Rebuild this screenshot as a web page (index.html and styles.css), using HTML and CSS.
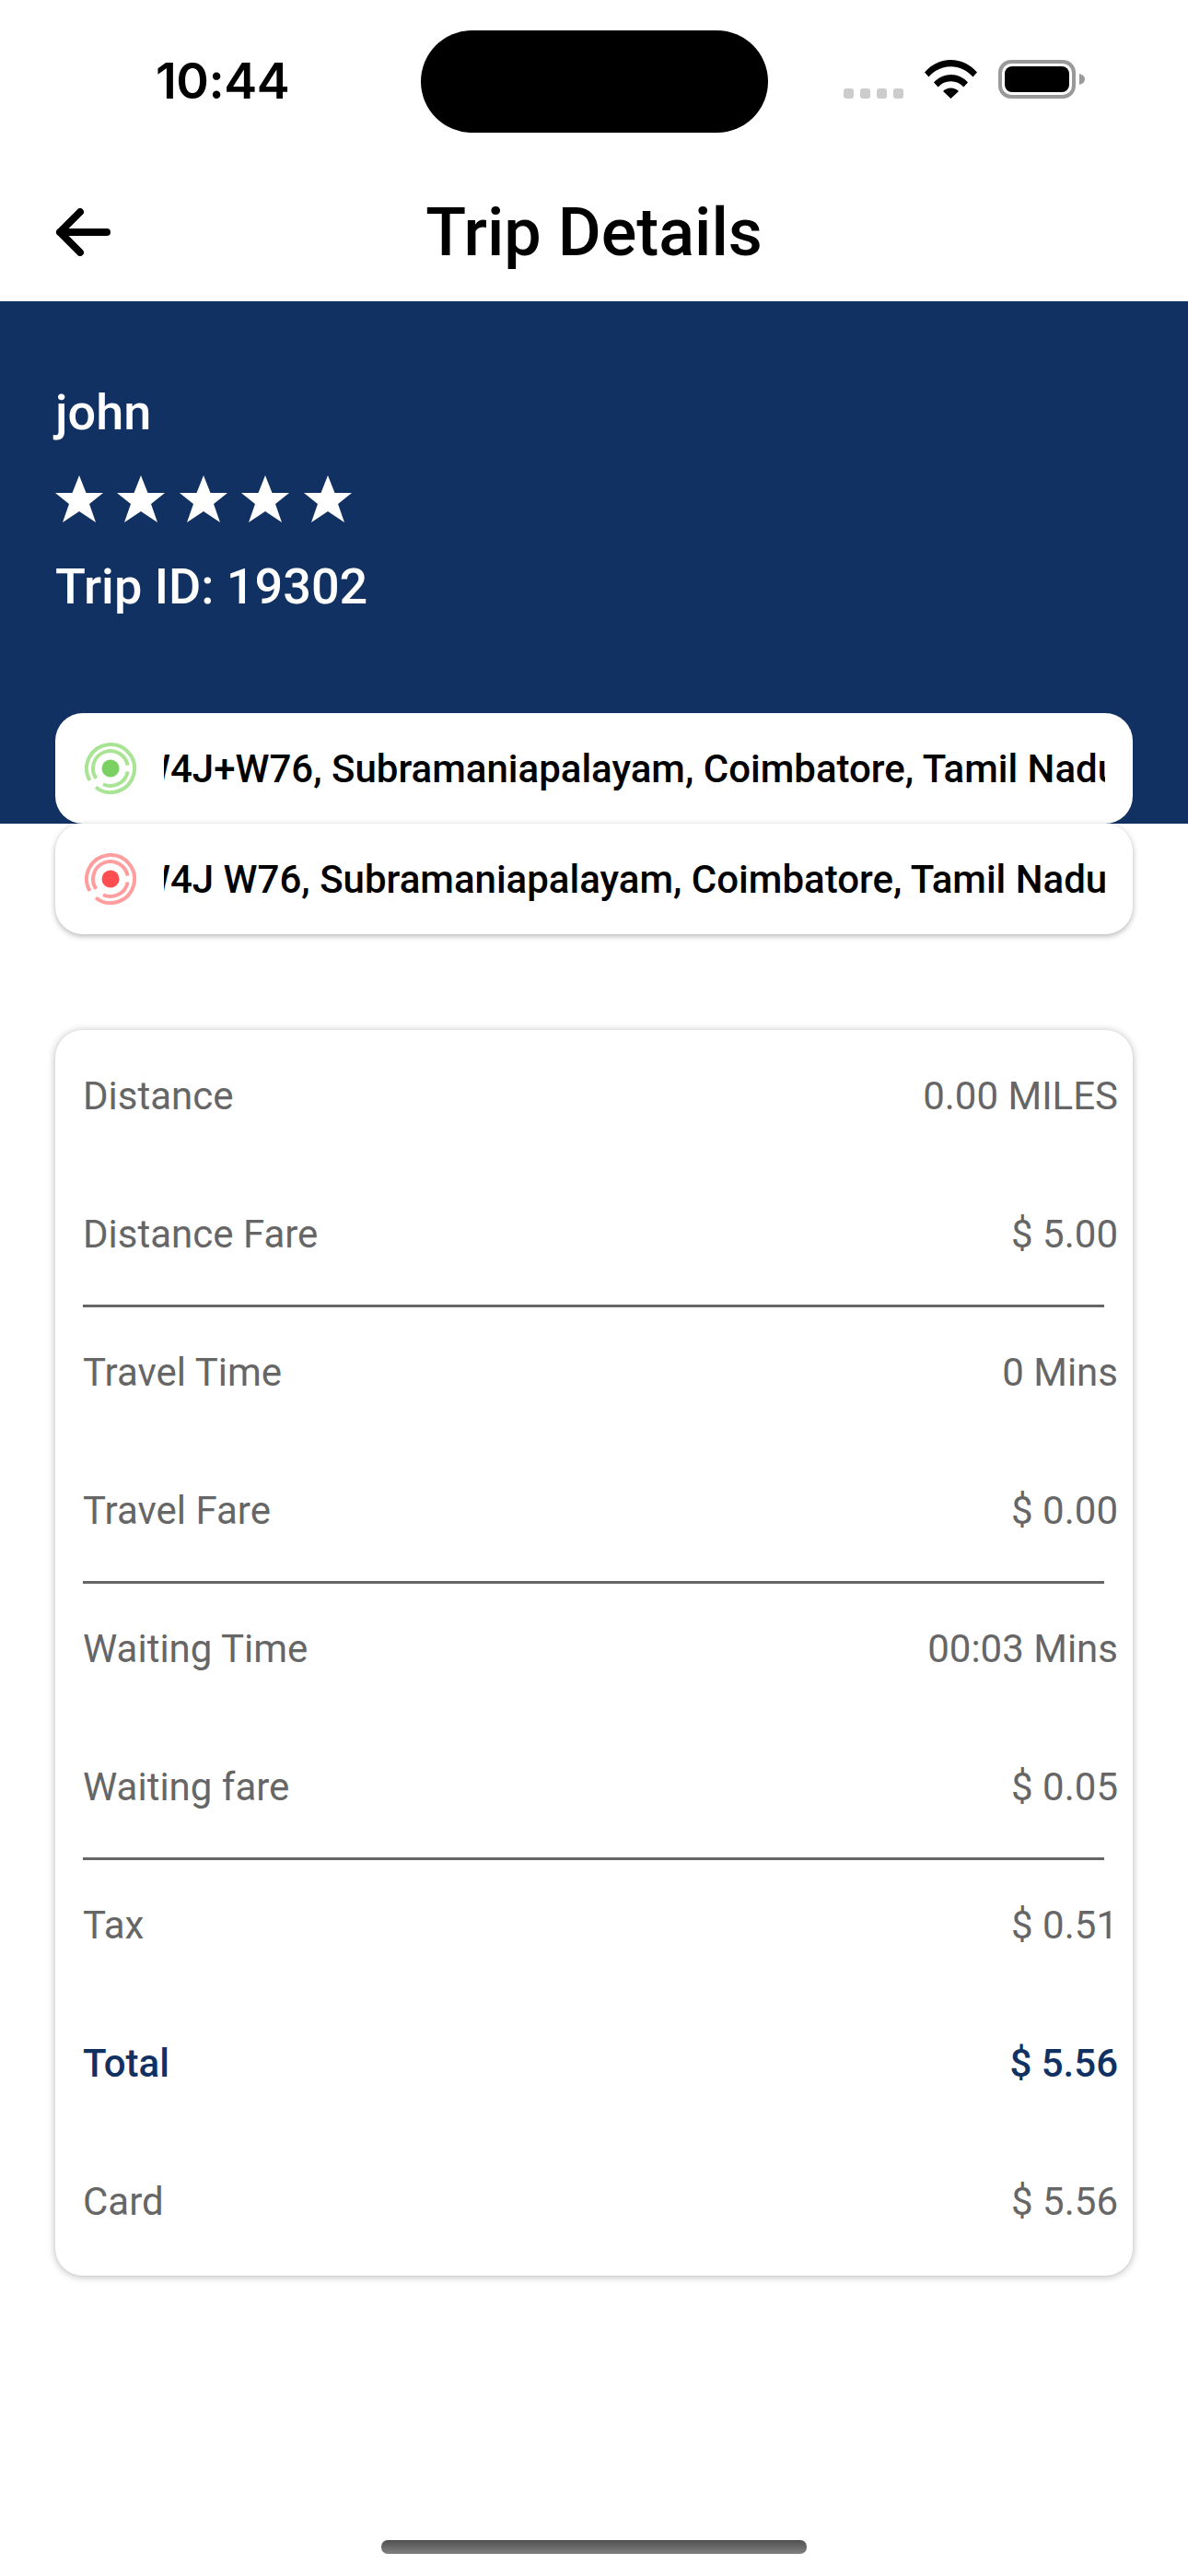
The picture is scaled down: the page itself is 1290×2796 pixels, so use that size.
FILE: index.html
```html
<!DOCTYPE html>
<html lang="en">
<head>
    <meta charset="UTF-8">
    <title>Trip Details</title>
    <link rel="stylesheet" href="styles.css">
</head>
<body>
<div class="pantalla">
    <div class="status">
        <span class="hora">10:44</span>
        <div class="isla"></div>
        <div class="señal">
            <div class="puntos"><i></i><i></i><i></i><i></i></div>
            <svg class="wifi" width="57" height="42" viewBox="0 0 57 42">
                <path d="M0 13.500C7.500 4.800 17.500 0 28.500 0S49.500 4.800 57 13.500L52.500 18.500C46 11.200 37.800 7.200 28.500 7.200S11 11.200 4.500 18.500Z"/>
                <path d="M10 24.500C14.800 19 21.200 16 28.500 16S42.200 19 47 24.500L42.300 29.500C38.600 25.300 33.900 23.200 28.500 23.200S18.400 25.300 14.700 29.500Z"/>
                <path d="M20 34C22.300 31.700 25.200 30.500 28.500 30.500S34.700 31.700 37 34L28.500 42Z"/>
            </svg>
            <svg class="bateria" width="94" height="42" viewBox="0 0 94 42">
                <rect x="2" y="2" width="80" height="38" rx="12" fill="none" stroke="#999" stroke-width="4"/>
                <rect x="7" y="7" width="70" height="28" rx="8"/>
                <path d="M88 15C91.500 16 94 18 94 21S91.500 26 88 27Z" fill="#999"/>
            </svg>
        </div>
    </div>

    <div class="barra">
        <svg class="atras" width="60" height="52" viewBox="0 0 60 52">
            <path d="M56 26H5M27 4L5 26L27 48" fill="none" stroke="#000" stroke-width="8" stroke-linecap="round" stroke-linejoin="round"/>
        </svg>
        <h1>Trip Details</h1>
    </div>

    <div class="banda">
        <div class="nombre">john</div>
        <div class="estrellas">
            <svg viewBox="0 0 52 52"><path d="M26 0L33.500 19H52L37 31L44 51L26 39L8 51L15 31L0 19H18.500Z"/></svg>
            <svg viewBox="0 0 52 52"><path d="M26 0L33.500 19H52L37 31L44 51L26 39L8 51L15 31L0 19H18.500Z"/></svg>
            <svg viewBox="0 0 52 52"><path d="M26 0L33.500 19H52L37 31L44 51L26 39L8 51L15 31L0 19H18.500Z"/></svg>
            <svg viewBox="0 0 52 52"><path d="M26 0L33.500 19H52L37 31L44 51L26 39L8 51L15 31L0 19H18.500Z"/></svg>
            <svg viewBox="0 0 52 52"><path d="M26 0L33.500 19H52L37 31L44 51L26 39L8 51L15 31L0 19H18.500Z"/></svg>
        </div>
        <div class="viaje">Trip ID: 19302</div>
    </div>

    <div class="direcciones">
        <div class="direccion">
            <svg class="marca verde" width="56" height="56" viewBox="0 0 56 56">
                <path d="M5.500 41A26 26 0 1 1 12 48.500"/>
                <path d="M12.400 38.900A19 19 0 1 1 46.700 24.700"/>
                <path d="M46.700 31.300A19 19 0 0 1 20 45.200"/>
                <circle cx="28" cy="28" r="9.500"/>
            </svg>
            <div class="recorte"><span>W4J+W76, Subramaniapalayam, Coimbatore, Tamil Nadu, India</span></div>
        </div>
        <div class="direccion sombra">
            <svg class="marca roja" width="56" height="56" viewBox="0 0 56 56">
                <path d="M5.500 41A26 26 0 1 1 12 48.500"/>
                <path d="M12.400 38.900A19 19 0 1 1 46.700 24.700"/>
                <path d="M46.700 31.300A19 19 0 0 1 20 45.200"/>
                <circle cx="28" cy="28" r="9.500"/>
            </svg>
            <div class="recorte"><span>W4J W76, Subramaniapalayam, Coimbatore, Tamil Nadu, India</span></div>
        </div>
    </div>

    <div class="detalle">
        <div class="fila"><span>Distance</span><span>0.00 MILES</span></div>
        <div class="fila"><span>Distance Fare</span><span>$ 5.00</span></div>
        <hr>
        <div class="fila"><span>Travel Time</span><span>0 Mins</span></div>
        <div class="fila"><span>Travel Fare</span><span>$ 0.00</span></div>
        <hr>
        <div class="fila"><span>Waiting Time</span><span>00:03 Mins</span></div>
        <div class="fila"><span>Waiting fare</span><span>$ 0.05</span></div>
        <hr>
        <div class="fila"><span>Tax</span><span>$ 0.51</span></div>
        <div class="fila total"><span>Total</span><span>$ 5.56</span></div>
        <div class="fila"><span>Card</span><span>$ 5.56</span></div>
    </div>

    <div class="inicio"></div>
</div>
</body>
</html>
```

FILE: styles.css
```css
* {
    box-sizing: border-box;
}
body {
    margin: 0;
    background: #fff;
    font-family: Roboto, "Liberation Sans", sans-serif;
}
.pantalla {
    position: relative;
    width: 1290px;
    height: 2796px;
    overflow: hidden;
    background: #fff;
}
.status {
    position: relative;
    height: 183px;
}
.hora {
    position: absolute;
    left: 169px;
    top: 57px;
    font-family: Inter, sans-serif;
    font-size: 54px;
    line-height: 62px;
    font-weight: 600;
    letter-spacing: -0.500px;
    color: #000;
}
.isla {
    position: absolute;
    left: 457px;
    top: 33px;
    width: 377px;
    height: 111px;
    border-radius: 56px;
    background: #000;
}
.señal {
    position: absolute;
    left: 916px;
    top: 65px;
    display: flex;
    align-items: flex-end;
}
.puntos {
    display: flex;
    gap: 7px;
    margin-right: 23px;
}
.puntos i {
    width: 11px;
    height: 11px;
    border-radius: 3px;
    background: #ccc;
}
.wifi {
    margin-right: 23px;
}
.barra {
    position: relative;
    height: 144px;
    padding-bottom: 6px;
    display: flex;
    align-items: center;
    justify-content: center;
}
.atras {
    position: absolute;
    left: 60px;
    top: 43px;
}
h1 {
    margin: 0;
    font-size: 72px;
    font-weight: 500;
    color: #000;
}
.banda {
    height: 567px;
    padding: 89px 60px 0;
    background: #123163;
    color: #fff;
}
.nombre {
    font-size: 54px;
    font-weight: 500;
    line-height: 64px;
}
.estrellas {
    display: flex;
    gap: 15.400px;
    margin-top: 36px;
}
.estrellas svg {
    width: 52px;
    height: 52px;
    fill: #fff;
}
.viaje {
    margin-top: 37px;
    font-size: 54px;
    font-weight: 500;
    line-height: 64px;
}
.direcciones {
    margin: -120px 60px 0;
    position: relative;
}
.direccion {
    height: 120px;
    padding: 0 30px 0 32px;
    display: flex;
    align-items: center;
    gap: 30px;
    background: #fff;
    border-radius: 30px;
}
.sombra {
    box-shadow: 0 2px 6px rgba(0, 0, 0, 0.3);
}
.marca {
    flex: none;
    fill: none;
    stroke-width: 4;
    filter: blur(0.700px);
}
.marca circle {
    stroke: none;
}
.verde {
    stroke: #a9e495;
}
.verde circle {
    fill: #7bd062;
}
.roja {
    stroke: #ff9e9e;
}
.roja circle {
    fill: #ff4d50;
}
.recorte {
    flex: 1;
    overflow: hidden;
    white-space: nowrap;
    font-size: 42px;
    font-weight: 500;
    color: #000;
}
.recorte span {
    display: inline-block;
    margin-left: -30px;
}
.detalle {
    margin: 104px 60px 0;
    height: 1352px;
    padding: 0 16px 0 30px;
    background: #fff;
    border-radius: 30px;
    box-shadow: 0 1px 8px rgba(0, 0, 0, 0.3);
}
.fila {
    height: 150px;
    padding-bottom: 8px;
    display: flex;
    align-items: center;
    justify-content: space-between;
    font-size: 42px;
    color: #666;
}
.detalle hr {
    height: 3px;
    margin: -2px 15px -1px 0;
    border: 0;
    background: #666;
}
.total {
    font-weight: 500;
    color: #123163;
}
.inicio {
    position: absolute;
    left: 414px;
    top: 2757px;
    width: 462px;
    height: 15px;
    border-radius: 7px;
    background: linear-gradient(#505050, #808080);
}
```
